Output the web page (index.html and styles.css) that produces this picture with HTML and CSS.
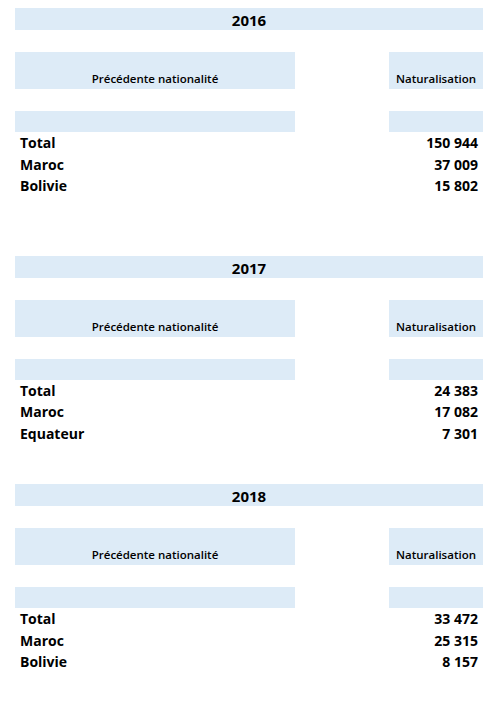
FILE: index.html
```html
<!DOCTYPE html>
<html lang="fr">
<head>
  <meta charset="UTF-8">
  <title>Naturalisations par année</title>
  <link rel="stylesheet" href="styles.css">
</head>
<body>
  <div class="year-block first">
    <div class="year">2016</div>
    <div class="head-row">
      <div class="head-cell">Précédente nationalité</div>
      <div class="head-cell">Naturalisation</div>
    </div>
    <div class="blank-row">
      <div class="blank-cell"></div>
      <div class="blank-cell"></div>
    </div>
    <div class="data-row"><span>Total</span><span>150 944</span></div>
    <div class="data-row"><span>Maroc</span><span>37 009</span></div>
    <div class="data-row"><span>Bolivie</span><span>15 802</span></div>
  </div>

  <div class="year-block">
    <div class="year">2017</div>
    <div class="head-row">
      <div class="head-cell">Précédente nationalité</div>
      <div class="head-cell">Naturalisation</div>
    </div>
    <div class="blank-row">
      <div class="blank-cell"></div>
      <div class="blank-cell"></div>
    </div>
    <div class="data-row"><span>Total</span><span>24 383</span></div>
    <div class="data-row"><span>Maroc</span><span>17 082</span></div>
    <div class="data-row"><span>Equateur</span><span>7 301</span></div>
  </div>

  <div class="year-block">
    <div class="year">2018</div>
    <div class="head-row">
      <div class="head-cell">Précédente nationalité</div>
      <div class="head-cell">Naturalisation</div>
    </div>
    <div class="blank-row">
      <div class="blank-cell"></div>
      <div class="blank-cell"></div>
    </div>
    <div class="data-row"><span>Total</span><span>33 472</span></div>
    <div class="data-row"><span>Maroc</span><span>25 315</span></div>
    <div class="data-row"><span>Bolivie</span><span>8 157</span></div>
  </div>
</body>
</html>
```

FILE: styles.css
```css
body {
  font-family: "Open Sans", "Liberation Sans", sans-serif;
  margin: 0;
  padding: 8px 17px 0 15px;
  background-color: #fff;
  color: #000;
}

.year-block {
  margin-bottom: 40px;
}

.year-block.first {
  margin-bottom: 59px;
}

.year {
  background-color: #ddebf7;
  height: 22px;
  line-height: 22px;
  padding-top: 1px;
  box-sizing: border-box;
  text-align: center;
  font-weight: bold;
  font-size: 15px;
}

.head-row, .blank-row {
  display: grid;
  grid-template-columns: 280px 94px;
  justify-content: space-between;
}

.head-row {
  margin-top: 22px;
}

.head-cell {
  background-color: #ddebf7;
  height: 37px;
  display: flex;
  align-items: flex-end;
  justify-content: center;
  padding-bottom: 3px;
  box-sizing: border-box;
  font-size: 11.5px;
  font-weight: 600;
  line-height: 15px;
}

.blank-row {
  margin-top: 22px;
}

.blank-cell {
  background-color: #ddebf7;
  height: 21px;
}

.data-row {
  display: flex;
  justify-content: space-between;
  padding: 0 5px 0 5px;
  font-size: 14px;
  font-weight: bold;
  line-height: 21.5px;
}
```
